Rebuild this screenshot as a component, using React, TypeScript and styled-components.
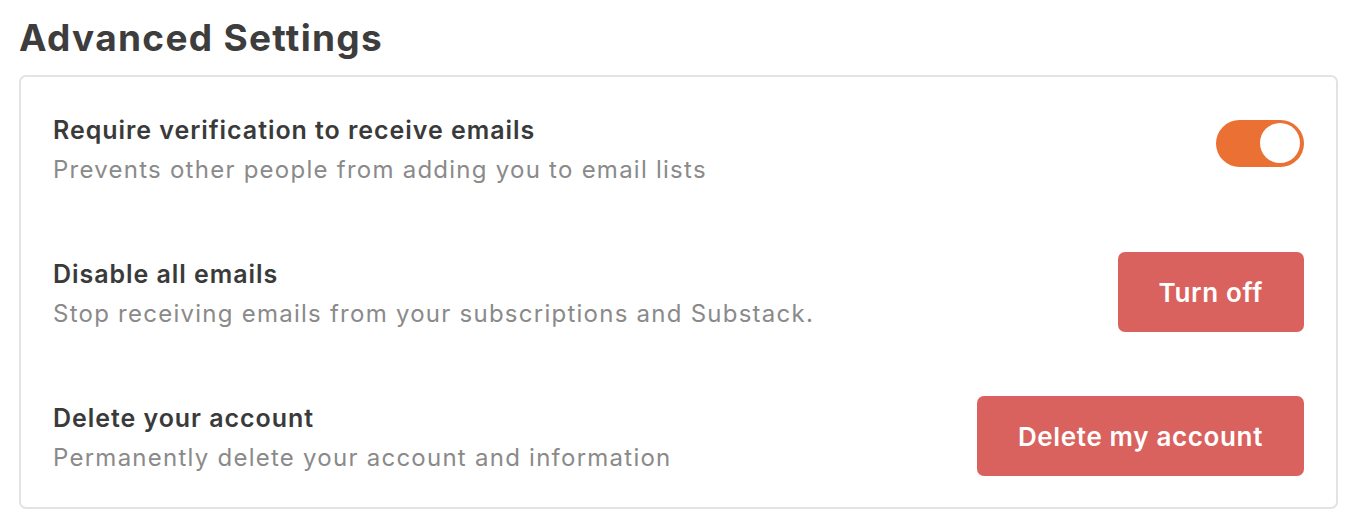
import React, { useState } from "react";
import styled, { createGlobalStyle } from "styled-components";

const Global = createGlobalStyle`
  html, body { margin: 0; padding: 0; background: #ffffff; }
  body { font-family: Inter, "Noto Sans", "Liberation Sans", sans-serif; -webkit-font-smoothing: antialiased; }
  * { box-sizing: border-box; }
`;

const Page = styled.div`
  padding: 14px 19px 0 19px;
  width: 1358px;
`;

const Heading = styled.h1`
  margin: 0 0 13px 0;
  font-size: 37px;
  line-height: 48px;
  font-weight: 700;
  color: #3d3d3d;
  letter-spacing: 1.3px;
`;

const Card = styled.div`
  width: 1319px;
  border: 2px solid #e3e3e3;
  border-radius: 7px;
  padding: 31px 32px 31px 32px;
  display: flex;
  flex-direction: column;
  gap: 64px;
`;

const Row = styled.div`
  display: flex;
  align-items: center;
  justify-content: space-between;
  height: 80px;
`;

const TextBlock = styled.div`
  display: flex;
  flex-direction: column;
  gap: 8px;
  padding-top: 4px;
`;

const Title = styled.div`
  font-size: 25px;
  line-height: 32px;
  font-weight: 600;
  color: #3a3a3a;
  letter-spacing: 0.95px;
`;

const Desc = styled.div`
  font-size: 24px;
  line-height: 32px;
  font-weight: 400;
  color: #8a8a8a;
  letter-spacing: 1.25px;
`;

const Toggle = styled.button<{ $on: boolean }>`
  width: 88px;
  height: 47px;
  border-radius: 24px;
  border: none;
  padding: 0 4px;
  margin-bottom: 10px;
  background: ${(p) => (p.$on ? "#ea7034" : "#d0d0d0")};
  display: flex;
  align-items: center;
  justify-content: ${(p) => (p.$on ? "flex-end" : "flex-start")};
  cursor: pointer;
`;

const Knob = styled.span`
  width: 40px;
  height: 40px;
  border-radius: 50%;
  background: #ffffff;
  display: block;
`;

const DangerButton = styled.button`
  height: 80px;
  padding: 0 41px;
  border: none;
  border-radius: 7px;
  background: #da625e;
  color: #ffffff;
  font-family: inherit;
  font-size: 26px;
  font-weight: 600;
  letter-spacing: 0.65px;
  cursor: pointer;
`;

export default function App() {
  const [on, setOn] = useState(true);
  return (
    <Page>
      <Global />
      <Heading>Advanced Settings</Heading>
      <Card>
        <Row>
          <TextBlock>
            <Title>Require verification to receive emails</Title>
            <Desc>Prevents other people from adding you to email lists</Desc>
          </TextBlock>
          <Toggle $on={on} onClick={() => setOn(!on)}>
            <Knob />
          </Toggle>
        </Row>
        <Row>
          <TextBlock>
            <Title>Disable all emails</Title>
            <Desc>Stop receiving emails from your subscriptions and Substack.</Desc>
          </TextBlock>
          <DangerButton>Turn off</DangerButton>
        </Row>
        <Row>
          <TextBlock>
            <Title>Delete your account</Title>
            <Desc>Permanently delete your account and information</Desc>
          </TextBlock>
          <DangerButton>Delete my account</DangerButton>
        </Row>
      </Card>
    </Page>
  );
}
